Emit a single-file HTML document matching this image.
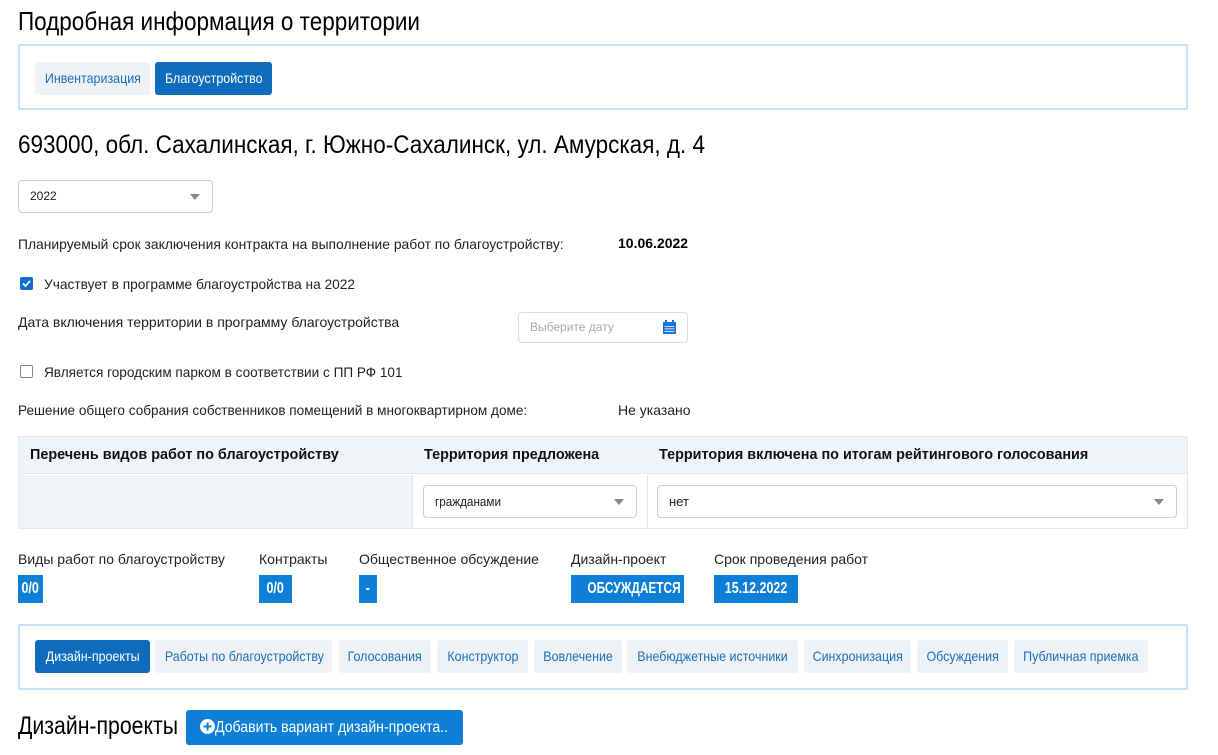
<!DOCTYPE html>
<html><head><meta charset="utf-8"><style>
*{box-sizing:border-box;margin:0;padding:0}
body{width:1218px;height:755px;background:#fff;position:relative;overflow:hidden;font-family:"Liberation Sans",sans-serif;color:#111}
.a{position:absolute;white-space:nowrap}
.c{display:inline-block;transform-origin:left center}
.h{font-size:26px;color:#000}
.box{position:absolute;border:2px solid #c9e1f5;border-radius:2px}
.btn{position:absolute;height:33px;line-height:33px;text-align:center;font-size:14px;border-radius:3px;background:#eef2f6;color:#1a6fb8;white-space:nowrap;overflow:visible}
.btn span{display:inline-block;transform:scaleX(.89);transform-origin:center}
.btn.on{background:#0f6cbd;color:#fff}
.t{font-size:14px;color:#222}
.sel{position:absolute;border:1px solid #ccc;border-radius:4px;background:#fff;font-size:13px;color:#222;padding-left:11px}
.sel:after{content:"";position:absolute;right:12px;top:50%;margin-top:-3px;border-left:5px solid transparent;border-right:5px solid transparent;border-top:6px solid #888}
.badge{position:absolute;height:28px;line-height:28px;background:#0e7fd6;color:#fff;font-weight:bold;font-size:16px;top:575px;text-align:center;white-space:nowrap}
.badge span{display:inline-block;transform:scaleX(.78);transform-origin:center}
.th{font-weight:bold;font-size:15px;color:#111}
</style></head><body>
<div class="a h" style="left:18px;top:6px"><span class="c" style="transform:scaleX(.865)">Подробная информация о территории</span></div>
<div class="box" style="left:18px;top:44px;width:1170px;height:66px"></div>
<div class="btn" style="left:35px;top:62px;width:115px"><span>Инвентаризация</span></div>
<div class="btn on" style="left:155px;top:62px;width:117px"><span>Благоустройство</span></div>
<div class="a" style="left:18px;top:131px;font-size:25px;color:#000"><span class="c" style="transform:scaleX(.9)">693000, обл. Сахалинская, г. Южно-Сахалинск, ул. Амурская, д. 4</span></div>
<div class="sel" style="left:18px;top:180px;width:195px;height:33px;line-height:31px;font-size:12px">2022</div>
<div class="a t" style="left:18px;top:236px"><span class="c" style="transform:scaleX(.99)">Планируемый срок заключения контракта на выполнение работ по благоустройству:</span></div>
<div class="a" style="left:618px;top:235px;font-size:14px;font-weight:bold;color:#000">10.06.2022</div>
<div class="a" style="left:20px;top:277px;width:13px;height:13px;background:#0f6cd0;border-radius:2px"><svg width="13" height="13" style="display:block"><path d="M3 6.5l2.5 2.5 4.5-5" stroke="#fff" stroke-width="1.8" fill="none"/></svg></div>
<div class="a t" style="left:44px;top:276px"><span class="c" style="transform:scaleX(.98)">Участвует в программе благоустройства на 2022</span></div>
<div class="a t" style="left:18px;top:314px">Дата включения территории в программу благоустройства</div>
<div class="a" style="left:518px;top:312px;width:170px;height:31px;border:1px solid #ddd;border-radius:4px;font-size:12px;color:#aaa;line-height:29px;padding-left:11px">Выберите дату
<svg width="13" height="14" style="position:absolute;right:11px;top:7px"><rect x="0" y="2" width="13" height="12" fill="#1a73d6"/><rect x="2" y="0" width="2" height="3" fill="#1a73d6"/><rect x="9" y="0" width="2" height="3" fill="#1a73d6"/><g fill="#fff"><rect x="1.5" y="6" width="10" height="0.8"/><rect x="1.5" y="8.5" width="10" height="0.8"/><rect x="1.5" y="11" width="10" height="0.8"/></g></svg></div>
<div class="a" style="left:20px;top:365px;width:13px;height:13px;border:1.5px solid #888;border-radius:2px"></div>
<div class="a t" style="left:44px;top:364px"><span class="c" style="transform:scaleX(.97)">Является городским парком в соответствии с ПП РФ 101</span></div>
<div class="a t" style="left:18px;top:402px"><span class="c" style="transform:scaleX(.97)">Решение общего собрания собственников помещений в многоквартирном доме:</span></div>
<div class="a t" style="left:618px;top:402px">Не указано</div>
<div class="a" style="left:18px;top:436px;width:1170px;height:93px;border:1px solid #e3e8ec"></div>
<div class="a" style="left:19px;top:437px;width:1168px;height:37px;background:#f0f4f7;border-bottom:1px solid #e3e8ec"></div>
<div class="a" style="left:19px;top:475px;width:394px;height:53px;background:#f0f4f7;border-right:1px solid #e3e8ec"></div>
<div class="a" style="left:647px;top:475px;width:1px;height:53px;background:#e3e8ec"></div>
<div class="a th" style="left:30px;top:446px"><span class="c" style="transform:scaleX(.96)">Перечень видов работ по благоустройству</span></div>
<div class="a th" style="left:424px;top:446px"><span class="c" style="transform:scaleX(.96)">Территория предложена</span></div>
<div class="a th" style="left:659px;top:446px"><span class="c" style="transform:scaleX(.96)">Территория включена по итогам рейтингового голосования</span></div>
<div class="sel" style="left:423px;top:485px;width:214px;height:33px;line-height:31px"><span class="c" style="transform:scaleX(.9)">гражданами</span></div>
<div class="sel" style="left:657px;top:485px;width:520px;height:33px;line-height:31px">нет</div>
<div class="a t" style="left:18px;top:551px">Виды работ по благоустройству</div>
<div class="a t" style="left:259px;top:551px">Контракты</div>
<div class="a t" style="left:359px;top:551px">Общественное обсуждение</div>
<div class="a t" style="left:571px;top:551px">Дизайн-проект</div>
<div class="a t" style="left:714px;top:551px">Срок проведения работ</div>
<div class="badge" style="left:18px;width:25px"><span>0/0</span></div>
<div class="badge" style="left:259px;width:33px"><span>0/0</span></div>
<div class="badge" style="left:359px;width:18px"><span>-</span></div>
<div class="badge" style="left:571px;width:113px"><span style="transform:scaleX(.74)">ОБСУЖДАЕТСЯ</span></div>
<div class="badge" style="left:714px;width:84px"><span>15.12.2022</span></div>
<div class="box" style="left:18px;top:624px;width:1170px;height:66px"></div>
<div class="btn on" style="left:35px;top:640px;width:115px"><span>Дизайн-проекты</span></div>
<div class="btn" style="left:155px;top:640px;width:177px"><span>Работы по благоустройству</span></div>
<div class="btn" style="left:339px;top:640px;width:92px"><span>Голосования</span></div>
<div class="btn" style="left:437px;top:640px;width:91px"><span>Конструктор</span></div>
<div class="btn" style="left:534px;top:640px;width:88px"><span>Вовлечение</span></div>
<div class="btn" style="left:627px;top:640px;width:171px"><span>Внебюджетные источники</span></div>
<div class="btn" style="left:804px;top:640px;width:107px"><span>Синхронизация</span></div>
<div class="btn" style="left:917px;top:640px;width:91px"><span>Обсуждения</span></div>
<div class="btn" style="left:1014px;top:640px;width:134px"><span>Публичная приемка</span></div>
<div class="a" style="left:18px;top:712px;font-size:25px;color:#000"><span class="c" style="transform:scaleX(.85)">Дизайн-проекты</span></div>
<div class="a" style="left:186px;top:710px;width:277px;height:35px;background:#0e7fd6;border-radius:3px;color:#fff;font-size:16px;line-height:35px;padding-left:14px"><svg width="15" height="15" style="vertical-align:-2px"><circle cx="7.5" cy="7.5" r="7.5" fill="#fff"/><path d="M7.5 3.5v8M3.5 7.5h8" stroke="#0e7fd6" stroke-width="2"/></svg><span class="c" style="transform:scaleX(.88)">Добавить вариант дизайн-проекта..</span></div>
</body></html>
